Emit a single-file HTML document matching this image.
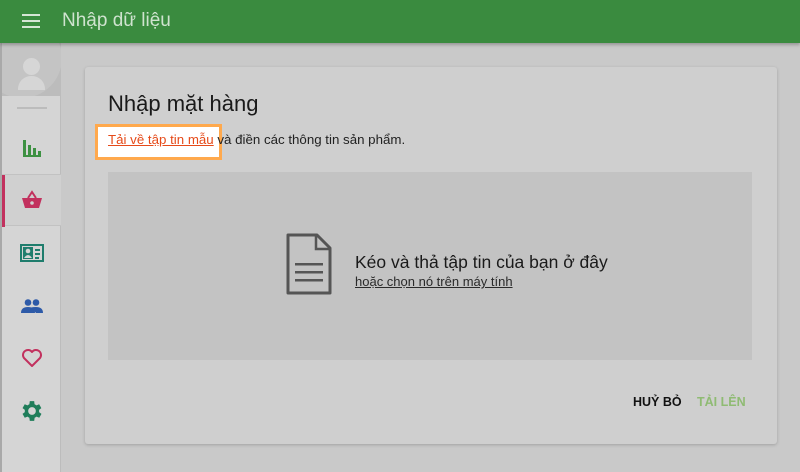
<!DOCTYPE html>
<html><head><meta charset="utf-8"><style>
*{margin:0;padding:0;box-sizing:border-box}
body{width:800px;height:472px;overflow:hidden;background:#c9c9c9;font-family:"Liberation Sans",Arial,sans-serif;position:relative}
.bar{position:absolute;left:0;top:0;width:800px;height:43px;background:#3a8b3f;box-shadow:0 2px 3px rgba(0,0,0,.25);z-index:3}
.bar .t{position:absolute;left:62px;top:10px;font-size:19px;color:#cfe3cf}
.side{position:absolute;left:2px;top:43px;width:59px;height:429px;background:#d5d5d5;border-right:1px solid #bcbcbc}
.edge{position:absolute;left:0;top:43px;width:2px;height:429px;background:#a9a9a9}
.av{position:absolute;left:0;top:0;width:59px;height:53px;background:#bcbcbc;overflow:hidden}
.ic{position:absolute;left:0;width:59px;height:52px;display:flex;align-items:center;justify-content:center}
.card{position:absolute;left:85px;top:67px;width:692px;height:377px;background:#cfcfcf;border-radius:3px;box-shadow:0 1px 3px rgba(0,0,0,.2)}
h1{position:absolute;left:23px;top:24px;font-size:22px;font-weight:normal;color:#1a1a1a}
.p{position:absolute;left:23px;top:65px;font-size:13.3px;color:#222;white-space:nowrap}
.hl{position:absolute;left:10px;top:57px;width:127px;height:36px;border:3px solid #ffa94d;background:#fff}
.p a{color:#e64a19;text-decoration:underline}
.dz{position:absolute;left:23px;top:105px;width:644px;height:188px;background:#c3c3c3}
.btn{position:absolute;top:328px;font-size:12.5px;font-weight:bold}
</style></head><body>
<div class="bar">
<svg style="position:absolute;left:22px;top:14px" width="18" height="14"><rect y="0" width="18" height="2" fill="#d5e6d5"/><rect y="6" width="18" height="2" fill="#d5e6d5"/><rect y="12" width="18" height="2" fill="#d5e6d5"/></svg>
<div class="t">Nhập dữ liệu</div></div>
<div class="edge"></div>
<div class="side">
<div class="av"><div style="position:absolute;left:-20px;top:-25px;width:80px;height:80px;border-radius:50%;background:#c4c4c4"></div>
<div style="position:absolute;left:21px;top:15px;width:17px;height:17px;border-radius:50%;background:#d6d6d6"></div>
<div style="position:absolute;left:16px;top:33px;width:27px;height:14px;border-radius:13px 13px 0 0;background:#d6d6d6"></div></div>
<div style="position:absolute;left:15px;top:64px;width:30px;height:2px;background:#bcbcbc"></div>
<div class="ic" style="top:79px"><svg width="20" height="18"><rect x="1" y="1" width="3" height="17" fill="#3d9142"/><rect x="6" y="6" width="3" height="12" fill="#3d9142"/><rect x="11" y="9" width="3" height="9" fill="#3d9142"/><rect x="16" y="12" width="3" height="6" fill="#3d9142"/><rect x="1" y="16" width="18" height="2" fill="#3d9142"/></svg></div>
<div class="ic" style="top:131px;background:#d0d0d0;border-top:1px solid #c2c2c2;border-bottom:1px solid #c2c2c2"><div style="position:absolute;left:0;top:0;width:3px;height:52px;background:#c2315e"></div><svg width="22" height="20"><path d="M7 8 L11 2 L15 8" stroke="#c2315e" stroke-width="2" fill="none"/><path d="M1 8 H21 L18 18 H4 Z" fill="#c2315e"/><circle cx="11" cy="13" r="1.8" fill="#d0d0d0"/></svg></div>
<div class="ic" style="top:184px"><svg width="24" height="18"><rect width="24" height="18" fill="#1f7d6d"/><rect x="2" y="2" width="20" height="14" fill="#d5d5d5"/><rect x="3" y="3" width="10" height="12" fill="#1f7d6d"/><circle cx="8" cy="7" r="2.3" fill="#d5d5d5"/><path d="M4 14 Q8 8 12 14Z" fill="#d5d5d5"/><rect x="15" y="5" width="5" height="2" fill="#1f7d6d"/><rect x="15" y="9" width="5" height="2" fill="#1f7d6d"/><rect x="15" y="13" width="4" height="2" fill="#1f7d6d"/></svg></div>
<div class="ic" style="top:237px"><svg width="22" height="14"><circle cx="7" cy="3.5" r="3.3" fill="#2d5aa8"/><circle cx="15" cy="3.5" r="3.3" fill="#2d5aa8"/><path d="M0 14 Q0 8 7 8 Q14 8 14 14Z" fill="#2d5aa8"/><path d="M10 8.5 Q12 8 15 8 Q22 8 22 14 H15Z" fill="#2d5aa8"/></svg></div>
<div class="ic" style="top:289px"><svg width="22" height="20"><path d="M11 18 L3 10 A4.8 4.8 0 0 1 11 4 A4.8 4.8 0 0 1 19 10 Z" stroke="#c2315e" stroke-width="2" fill="none" stroke-linejoin="round"/></svg></div>
<div class="ic" style="top:342px"><svg width="22" height="22" viewBox="2 2 20 20"><path fill="#1f7d5a" d="M19.4 13a7.5 7.5 0 0 0 0-2l2.1-1.6-2-3.5-2.5 1a7 7 0 0 0-1.7-1L15 3h-4l-.4 2.9a7 7 0 0 0-1.7 1l-2.5-1-2 3.5L6.5 11a7.5 7.5 0 0 0 0 2l-2.1 1.6 2 3.5 2.5-1a7 7 0 0 0 1.7 1L11 21h4l.4-2.9a7 7 0 0 0 1.7-1l2.5 1 2-3.5zM13 15.5a3.5 3.5 0 1 1 0-7 3.5 3.5 0 0 1 0 7z" transform="translate(-1 0)"/></svg></div>
</div>
<div class="card">
<h1>Nhập mặt hàng</h1>
<div class="hl"></div>
<div class="p"><a>Tải về tập tin mẫu</a> và điền các thông tin sản phẩm.</div>
<div class="dz">
<svg style="position:absolute;left:177px;top:61px" width="48" height="64"><path d="M3 2 H32 L45 15 V60 H3 Z" fill="none" stroke="#555" stroke-width="3" stroke-linejoin="round"/><path d="M31 2 V16 H45" fill="none" stroke="#555" stroke-width="2.5"/><rect x="10" y="30" width="28" height="2.5" fill="#555"/><rect x="10" y="38" width="28" height="2.5" fill="#555"/><rect x="10" y="46" width="28" height="2.5" fill="#555"/></svg>
<div style="position:absolute;left:247px;top:80px;font-size:17.5px;color:#1a1a1a;white-space:nowrap">Kéo và thả tập tin của bạn ở đây</div>
<div style="position:absolute;left:247px;top:102px;font-size:13px;color:#2a2a2a;text-decoration:underline;white-space:nowrap">hoặc chọn nó trên máy tính</div>
</div>
<div class="btn" style="left:548px;color:#111">HUỶ BỎ</div>
<div class="btn" style="left:612px;color:#8fbb73">TẢI LÊN</div>
</div>
</body></html>
